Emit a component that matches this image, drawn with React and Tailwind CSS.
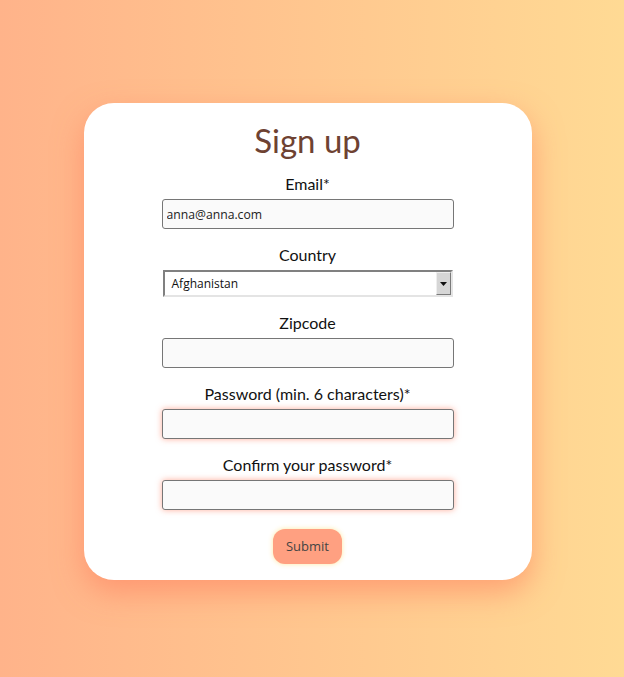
export default function App() {
  const labelCls = 'block text-[16px] leading-[20px] text-[#111] mb-[5px]';
  const inputCls =
    'block w-[292px] h-[30px] mx-auto rounded-[3px] border border-[#767676] bg-[#fafafa] px-[4px] text-[12.2px] text-[#222] outline-none';

  return (
    <div
      className="min-h-screen w-full flex items-center justify-center pr-[9px] pt-[6px] bg-gradient-to-r from-[#ffb38a] to-[#ffda94]"
      style={{ fontFamily: 'Lato, "Open Sans", sans-serif' }}
    >
      <div className="w-[448px] bg-white rounded-[30px] pt-[16px] pb-[16px] text-center shadow-[0_12px_30px_rgba(255,120,90,0.55)]">
        <h1 className="text-[33px] leading-[43px] text-[#6e4232] mb-[12px]">Sign up</h1>

        {/* Email */}
        <div className="mb-[16px]">
          <label className={labelCls}>Email*</label>
          <input
            type="email"
            defaultValue="anna@anna.com"
            className={inputCls}
            style={{ fontFamily: '"Open Sans", sans-serif' }}
          />
        </div>

        {/* Country */}
        <div className="mb-[16px]">
          <label className={labelCls}>Country</label>
          <div
            className="mx-auto w-[290px] h-[27px] flex items-stretch border-2 border-t-[#808080] border-l-[#808080] border-b-[#e4e4e4] border-r-[#e4e4e4] bg-white text-left"
            style={{ fontFamily: '"Open Sans", sans-serif' }}
          >
            <span className="flex-1 flex items-center pl-[7px] text-[12px] text-[#111]">Afghanistan</span>
            <span className="w-[15px] flex items-center justify-center bg-[#d6d6d6] border border-t-[#eee] border-l-[#eee] border-b-[#7a7a7a] border-r-[#7a7a7a]">
              <svg width="7" height="4" viewBox="0 0 7 4">
                <path d="M0 0h7L3.5 4z" fill="#111" />
              </svg>
            </span>
          </div>
        </div>

        {/* Zipcode */}
        <div className="mb-[16px]">
          <label className={labelCls}>Zipcode</label>
          <input type="text" className={inputCls} />
        </div>

        {/* Password */}
        <div className="mb-[16px]">
          <label className={labelCls}>Password (min. 6 characters)*</label>
          <input type="password" className={`${inputCls} shadow-[0_0_6px_rgba(255,120,90,0.6)]`} />
        </div>

        {/* Confirm */}
        <div className="mb-[19px]">
          <label className={labelCls}>Confirm your password*</label>
          <input type="password" className={`${inputCls} shadow-[0_0_6px_rgba(255,120,90,0.6)]`} />
        </div>

        <button
          type="button"
          className="h-[35px] px-[13px] rounded-[12px] bg-[#ffa081] text-[13px] text-[#444] shadow-[0_0_5px_rgba(255,230,150,0.9)]"
          style={{ fontFamily: '"Open Sans", sans-serif' }}
        >
          Submit
        </button>
      </div>
    </div>
  );
}
